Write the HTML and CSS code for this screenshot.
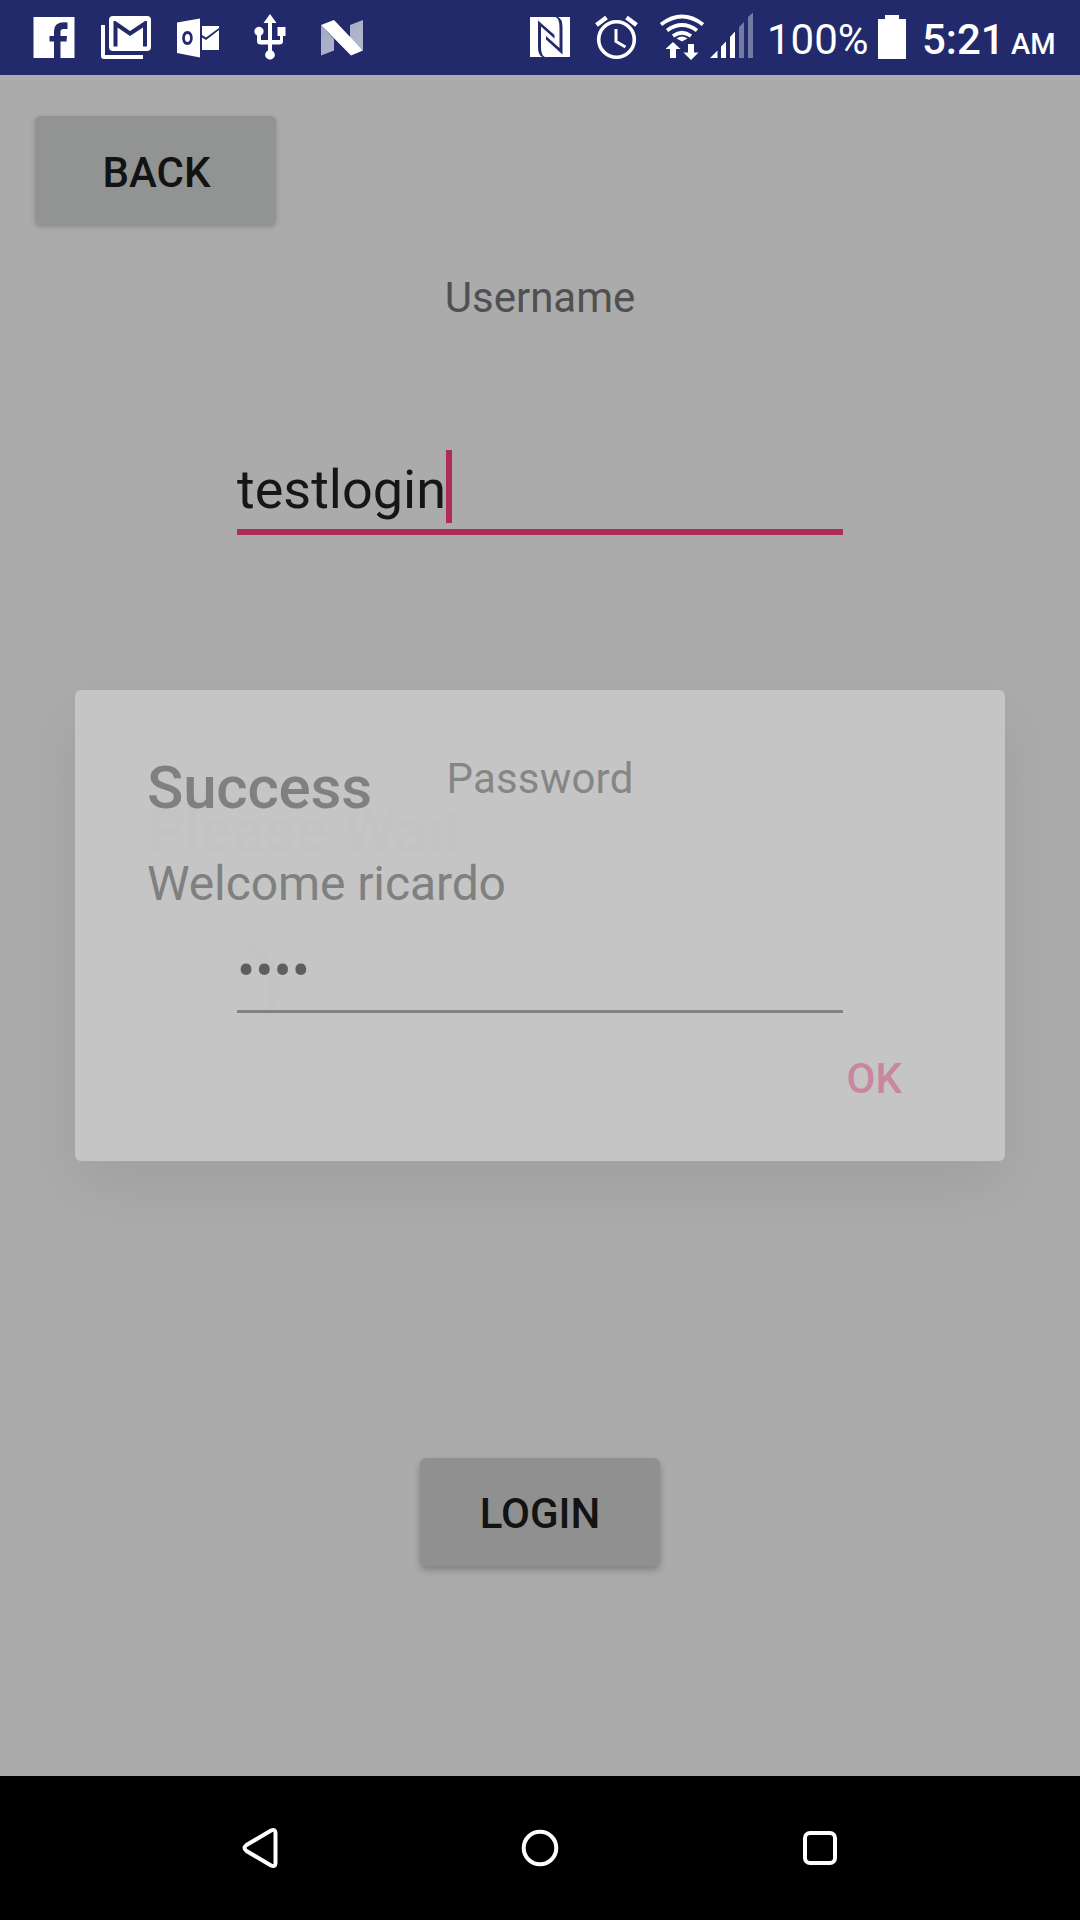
FILE: index.html
```html
<!DOCTYPE html>
<html lang="en">
<head>
<meta charset="utf-8">
<title>Login</title>
<link rel="stylesheet" href="styles.css">
</head>
<body>
<header class="status">
  <svg class="icons-left" width="400" height="75" viewBox="0 0 400 75" fill="#fff">
    <defs>
      <linearGradient id="fold" x1="0" x2="1" y1="0" y2="1"><stop offset="0" stop-color="#a3a7c4"/><stop offset="1" stop-color="#b6b9d0"/></linearGradient>
    </defs>
    <path d="M33.500 17h41v41H60.500V41.500H66.500L67 36h-6.500v-4.500q0-2.500 3-2.500H67.500V22.500Q54 21 54 31v5H49.500v5.500H54V58h-20.500z"/>
    <path d="M101 25h4v30h38v4h-39q-3 0-3-3z"/>
    <path fill-rule="evenodd" d="M113 16h34q4 0 4 4v27q0 4-4 4h-34q-4 0-4-4V20q0-4 4-4zM113.500 21v25.500h4V27.500L130 36 143 27.500V46.500h4V21h-2L130 31 115.500 21z"/>
    <path fill-rule="evenodd" d="M177 22.500 200 18.500V57.500L177 53zM187.500 31c-7 0-7 14 0 14s7-14 0-14zm0 3c3.500 0 3.500 8 0 8s-3.500-8 0-8z"/>
    <path d="M202 26h17v2l-13 9.500-4-2.500zM202 37.500l4 2.500 13-10V50h-17z"/>
    <path d="M270 14l6.500 9h-4.500v17h8V36h-2.500v-9h8v9H283v5q0 3.500-3.500 3.500H272v6a4.800 4.800 0 1 1-4 0v-6h-7.500q-3.500 0-3.500-3.500v-5.500a4.600 4.600 0 1 1 4 0V40h7V23h-4.500z"/>
    <path d="M321 25l13 14v11.500l-13 5zM350 25l13-5V50L350 38z" fill="url(#fold)"/>
    <path d="M321 25l13-5L363 50.500 351 55.500z"/>
  </svg>
  <svg class="icons-right" width="260" height="75" viewBox="520 0 260 75" fill="#fff">
    <path d="M530 17h40v40h-40z"/>
    <path fill="#222a6b" d="M538 20.500L554.500 35V38.500L541 26.500V47Q541 55.500 545 57H542.500Q538 55 538 47zM562.500 54.500L546 39.500V36L559.500 48V27Q559.500 18.500 555.500 17H558Q562.500 19 562.500 27z"/>
    <g fill="none" stroke="#fff">
      <circle cx="616.500" cy="39.500" r="17.800" stroke-width="3.600"/>
      <path d="M616 29v12.500l9.500 5.500" stroke-width="3"/>
      <path d="M596.500 25l10-7.500M626.500 17.500l10 7.500" stroke-width="4.500"/>
      <path d="M661 24.500q21-16 42 0M667 30.500q15-11 30 0M673 36q9-6.500 18 0" stroke-width="3.700"/>
    </g>
    <path d="M676.500 38.500q5.500-4 11 0L682 41.500zM673 42l7.500 7H676v9h-6v-9h-4.500zM688 44h6v8.500h4.500L691 60l-7.500-7.500h4.500z"/>
    <path d="M710 58l7.500-7.500V58zM721 46.500l5-5V58h-5zM730 37l5-5.500V58h-5z"/>
    <path d="M739 27l5-5V58h-5zM748 17l5-4.500V58h-5z" fill="#757aa3"/>
  </svg>
  <span class="percent">100%</span>
  <svg class="battery" width="28" height="44" viewBox="0 0 28 44" fill="#fff"><path d="M7 0h14v4h7v40H0V4h7z"/></svg>
  <span class="clock">5:21</span><span class="ampm">AM</span>
</header>

<main class="screen">
  <button class="btn btn-back">BACK</button>
  <label class="label">Username</label>
  <div class="field field-user"><span>testlogin</span><i class="caret"></i></div>
  <label class="label label-pass">Password</label>
  <div class="field field-pass">••••</div>
  <button class="btn btn-login">LOGIN</button>

  <section class="progress">
    <h2 class="progress-title">Please Wait</h2>
    <div class="progress-row">
      <svg class="spinner" width="120" height="120" viewBox="0 0 120 120"><path d="M41 17A50 50 0 0 1 60 88"/></svg>
      <p class="progress-text">Logging in...</p>
    </div>
  </section>
  <section class="dialog">
    <h2 class="dialog-title">Success</h2>
    <p class="dialog-text">Welcome ricardo</p>
    <span class="dialog-ok">OK</span>
  </section>
</main>

<nav class="nav">
  <svg width="40" height="44" viewBox="0 0 40 44"><path d="M31 4.500Q35.500 2.500 35.500 7V37Q35.500 41.500 31 39.500L6.500 25Q2.500 22 6.500 19z"/></svg>
  <svg width="40" height="44" viewBox="0 0 40 44"><circle cx="20" cy="22" r="16.300"/></svg>
  <svg width="40" height="44" viewBox="0 0 40 44"><rect x="5" y="7" width="30" height="30" rx="5"/></svg>
</nav>
</body>
</html>
```
FILE: styles.css
```css
* { box-sizing: border-box; }
body {
  margin: 0;
  width: 1080px;
  height: 1920px;
  display: flex;
  flex-direction: column;
  overflow: hidden;
  background: #ababab;
  font-family: Roboto, sans-serif;
}
h2, p { margin: 0; }
.status {
  height: 75px;
  display: flex;
  background: #222a6b;
  color: #fff;
  line-height: 80px;
  white-space: nowrap;
}
.icons-right { margin-left: 120px; }
.percent { width: 98px; margin-left: -13px; font-size: 42px; }
.battery { margin: 15px 0 0 13px; }
.clock { margin-left: 16px; width: 89px; font-size: 42px; font-weight: 500; }
.ampm { font-size: 29px; font-weight: 500; line-height: 88px; }
.screen {
  position: relative;
  height: 1701px;
  display: flex;
  flex-direction: column;
  align-items: center;
}
.btn {
  padding: 0;
  border: 0;
  border-radius: 6px;
  font: 500 42px/110px Roboto, sans-serif;
  color: #131313;
  text-align: center;
}
.btn-back {
  align-self: flex-start;
  width: 241px;
  height: 110px;
  margin: 41px 0 0 35px;
  padding: 2px 0 0 2px;
  background: #929493;
  box-shadow: 0 1px 5px rgba(0, 0, 0, .18);
}
.label {
  margin-top: 47px;
  height: 50px;
  font-size: 42px;
  line-height: 50px;
  color: #505050;
}
.field {
  width: 606px;
  font-size: 54px;
  line-height: 64px;
  color: #161616;
}
.field-user {
  height: 85px;
  margin-top: 127px;
  display: flex;
  border-bottom: 6px solid #b02c58;
}
.field-user span { width: 209px; padding-top: 8px; }
.caret { width: 6px; height: 73px; background: #b02c58; }
.label-pass { margin-top: 219px; letter-spacing: .2px; }
.field-pass {
  height: 84px;
  margin-top: 125px;
  padding-top: 10px;
  border-bottom: 3px solid #4b4b4b;
}
.btn-login {
  width: 240px;
  height: 108px;
  margin-top: 445px;
  padding-top: 1px;
  background: #909090;
  box-shadow: 0 4px 7px rgba(0, 0, 0, .25);
}
.dialog {
  position: absolute;
  left: 75px;
  top: 615px;
  width: 930px;
  height: 471px;
  padding: 62px 72px 0;
  display: flex;
  flex-direction: column;
  border-radius: 6px;
  background: rgba(255, 255, 255, .31);
  box-shadow: 0 24px 64px rgba(0, 0, 0, .07);
}
.dialog-title { height: 70px; font-size: 60px; font-weight: 500; line-height: 72px; letter-spacing: -.2px; color: #808080; }
.dialog-text { height: 56px; margin-top: 33px; font-size: 48px; line-height: 58px; letter-spacing: -.1px; color: #808080; }
.dialog-ok {
  align-self: flex-end;
  margin: 143px 31px 0 0;
  font-size: 42px;
  font-weight: 500;
  line-height: 50px;
  color: #c9879d;
}
.progress {
  position: absolute;
  left: 147px;
  top: 721px;
  color: rgba(0, 0, 0, .016);
}
.progress-title { font-size: 60px; font-weight: 500; line-height: 70px; }
.progress-row { display: flex; align-items: center; margin-top: 62px; }
.spinner { margin: 0 36px 0 60px; fill: none; stroke: rgba(0, 0, 0, .008); stroke-width: 11; }
.progress-text { font-size: 48px; line-height: 56px; }
.nav {
  height: 144px;
  padding: 50px 240px 0;
  display: flex;
  justify-content: space-between;
  background: #000;
}
.nav svg { fill: none; stroke: #fff; stroke-width: 4; }
```
